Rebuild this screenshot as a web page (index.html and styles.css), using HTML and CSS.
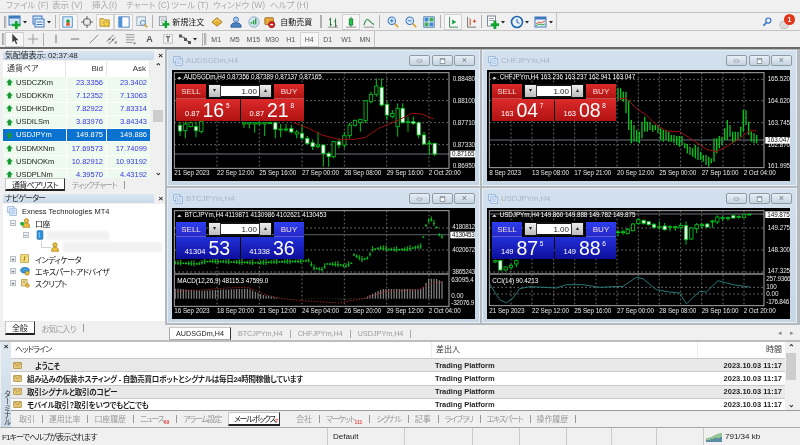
FILE: index.html
```html
<!DOCTYPE html>
<html lang="ja">
<head>
<meta charset="utf-8">
<title>MetaTrader 4</title>
<link rel="stylesheet" href="styles.css">
</head>
<body>
<svg class="defs" aria-hidden="true">
  <symbol id="i-up" viewBox="0 0 10 10"><path d="M5 0l5 5H7.4v4.4H2.6V5H0z" fill="#179a35"/></symbol>
  <symbol id="i-mail" viewBox="0 0 12 9"><rect x=".5" y=".5" width="11" height="8" rx="1" fill="#e2c676" stroke="#a88b3e"/><path d="M1 1l5 4 5-4" fill="none" stroke="#a88b3e"/></symbol>
  <symbol id="i-win" viewBox="0 0 14 14"><rect x="1" y="1" width="9" height="8" fill="#e8f0fa" stroke="#7aa3d6"/><rect x="4" y="4" width="9" height="9" fill="#e8f0fa" stroke="#7aa3d6"/><path d="M5.5 7h6M5.5 10h6" stroke="#7aa3d6"/></symbol>
  <symbol id="i-min" viewBox="0 0 9 9"><rect x="1" y="3" width="7" height="3" rx="1" fill="#fff" stroke="#6b7783"/></symbol>
  <symbol id="i-max" viewBox="0 0 9 9"><rect x="1" y="1" width="7" height="7" fill="#fff" stroke="#6b7783"/><path d="M1 2.500h7" stroke="#6b7783"/></symbol>
</svg>

<div class="app">
  <div class="menu">
    <span class="m1">ファイル (F)</span><span class="m2">表示 (V)</span><span class="m3">挿入(I)</span><span class="m4">チャート (C)</span><span class="m5">ツール (T)</span><span class="m6">ウィンドウ (W)</span><span class="m7">ヘルプ (H)</span>
  </div>

  <div class="tb tb1">
    <i class="grip"></i>
    <b class="ti wide"><svg viewBox="0 0 18 14" class="ic-w"><rect x="1" y="1" width="11" height="9" fill="#cfe3f7" stroke="#3f79bd"/><rect x="1" y="1" width="11" height="2.5" fill="#3f79bd"/><rect x="7" y="6" width="2.6" height="8" fill="#12a52d"/><rect x="4.3" y="8.7" width="8" height="2.6" fill="#12a52d"/><path d="M15 6h4l-2 2.4z" fill="#222"/></svg></b>
    <b class="ti wide"><svg viewBox="0 0 18 14" class="ic-w"><rect x="1" y="1" width="9" height="8" fill="#cfe3f7" stroke="#3f79bd"/><rect x="3" y="4" width="9" height="8" fill="#e8f1fb" stroke="#3f79bd"/><path d="M4.5 7h6M4.5 9.5h6" stroke="#3f79bd"/><path d="M15 6h4l-2 2.4z" fill="#222"/></svg></b>
    <i class="sep"></i>
    <b class="ti on"><svg viewBox="0 0 14 14"><rect x="1" y="1" width="11" height="12" fill="#e3f0fb" stroke="#3f88c5"/><circle cx="7" cy="6" r="2.2" fill="#2ea346"/><circle cx="7" cy="9.5" r="2.2" fill="#df5b33"/></svg></b>
    <b class="ti"><svg viewBox="0 0 14 14"><circle cx="7" cy="7" r="4.2" fill="#e9e9e9" stroke="#777" stroke-width="1.2"/><path d="M7 0v4M7 10v4M0 7h4M10 7h4" stroke="#666" stroke-width="1.2"/></svg></b>
    <b class="ti on"><svg viewBox="0 0 14 14"><path d="M1 3h4l1 1.5h6V12H1z" fill="#f1cf63" stroke="#ba9330"/><path d="M8.5 5l1.3 2.6 2.9.3-2.1 2 .6 2.9-2.7-1.4-2.6 1.4.6-2.9-2.1-2 2.9-.3z" fill="#f5d34c" stroke="#b38a23" stroke-width=".6"/></svg></b>
    <b class="ti on"><svg viewBox="0 0 14 14"><rect x="1" y="1" width="12" height="12" fill="#fff" stroke="#3f79bd"/><rect x="1" y="1" width="4" height="12" fill="#4d93d8"/></svg></b>
    <b class="ti"><svg viewBox="0 0 14 14"><rect x="1" y="1" width="10" height="10" fill="#e8eef5" stroke="#8fa1b5"/><circle cx="8" cy="8" r="3" fill="#d4e6f7" stroke="#5e84ad"/><path d="M10 10l3 3" stroke="#d6a034" stroke-width="2"/></svg></b>
    <i class="sep"></i>
    <b class="ti txt t1"><svg viewBox="0 0 14 14"><rect x="1.5" y="1" width="8" height="10" fill="#fff" stroke="#7d8a97"/><path d="M3 3.5h5M3 5.5h5M3 7.5h3" stroke="#9aa5b0"/><rect x="7.7" y="5.5" width="2.8" height="8.500" fill="#0fa52d"/><rect x="5" y="8.3" width="8.4" height="2.8" fill="#0fa52d"/></svg><span>新規注文</span></b>
    <b class="ti"><svg viewBox="0 0 14 14"><path d="M1 7l6-5 6 5-6 5z" fill="#e6b12e" stroke="#9b7415"/><path d="M3 7l4-3 4 3" fill="none" stroke="#f8e4a0"/></svg></b>
    <b class="ti"><svg viewBox="0 0 14 14"><circle cx="7" cy="4.2" r="3" fill="#a5c9ee" stroke="#3d6eab"/><path d="M1 13c0-4 2-5 6-5s6 1 6 5z" fill="#4b82c4" stroke="#2c5a95"/></svg></b>
    <b class="ti"><svg viewBox="0 0 14 14"><circle cx="7" cy="7" r="6" fill="#d8e8f4" stroke="#7fa3bf"/><path d="M4 9V7M6.5 10V5M9 10V3" stroke="#249a3e" stroke-width="1.6"/></svg></b>
    <b class="ti txt t2"><svg viewBox="0 0 14 14"><rect x="1" y="2" width="10" height="8" rx="1" fill="#e9a83a" stroke="#94681a"/><circle cx="9" cy="10" r="3.6" fill="#d92b2b" stroke="#8d1010"/><rect x="7.3" y="9.3" width="3.4" height="1.4" fill="#fff"/></svg><span>自動売買</span></b>
    <i class="sep s2"></i>
    <b class="ti"><svg viewBox="0 0 14 14"><path d="M4 2v10M2.5 4H4M4 10h1.5M10 3v10M8.5 6H10M10 11h1.5" stroke="#28763f" stroke-width="1.2" fill="none"/><path d="M1 13h12" stroke="#888"/></svg></b>
    <b class="ti on"><svg viewBox="0 0 14 14"><path d="M7 1v12" stroke="#187a30"/><rect x="5" y="3.5" width="4" height="7" fill="#22c848" stroke="#187a30"/><path d="M1 13h12" stroke="#888"/></svg></b>
    <b class="ti"><svg viewBox="0 0 14 14"><path d="M1 11c2-7 4-8 6-6s4 4 6 5" fill="none" stroke="#2f8a45" stroke-width="1.2"/><path d="M1 13h12" stroke="#888"/></svg></b>
    <i class="sep"></i>
    <b class="ti"><svg viewBox="0 0 14 14"><circle cx="5.6" cy="5.6" r="4.4" fill="#d5e8f8" stroke="#3f79bd" stroke-width="1.2"/><path d="M3.5 5.6h4.2M5.6 3.5v4.2" stroke="#1d6fbd"/><path d="M9 9l4 4" stroke="#d9a436" stroke-width="2"/></svg></b>
    <b class="ti"><svg viewBox="0 0 14 14"><circle cx="5.6" cy="5.6" r="4.4" fill="#d5e8f8" stroke="#3f79bd" stroke-width="1.2"/><path d="M3.5 5.6h4.2" stroke="#1d6fbd"/><path d="M9 9l4 4" stroke="#d9a436" stroke-width="2"/></svg></b>
    <b class="ti"><svg viewBox="0 0 14 14"><rect x="1" y="1" width="12" height="12" fill="#fff" stroke="#2d68a8"/><rect x="2" y="2" width="4.5" height="4.5" fill="#3f89d4"/><rect x="7.5" y="2" width="4.5" height="4.5" fill="#3fae58"/><rect x="2" y="7.5" width="4.5" height="4.5" fill="#3fae58"/><rect x="7.5" y="7.5" width="4.5" height="4.5" fill="#3f89d4"/></svg></b>
    <i class="sep"></i>
    <b class="ti on"><svg viewBox="0 0 14 14"><path d="M3 1v12h10" fill="none" stroke="#1f7f3a"/><path d="M6 4l5 3-5 3z" fill="#1fa648"/></svg></b>
    <b class="ti"><svg viewBox="0 0 14 14"><path d="M3 1v12h10" fill="none" stroke="#666"/><path d="M6 3v8M9 6h4M11 4v4" stroke="#d04a2a" stroke-width="1.2"/></svg></b>
    <i class="sep"></i>
    <b class="ti wide"><svg viewBox="0 0 18 14" class="ic-w"><rect x="1.5" y="1" width="8" height="10" fill="#fff" stroke="#7d8a97"/><path d="M3 3.5h5M3 5.5h5" stroke="#9aa5b0"/><rect x="7.5" y="5.5" width="2.8" height="8.500" fill="#0fa52d"/><rect x="4.8" y="8.3" width="8.2" height="2.8" fill="#0fa52d"/><path d="M15 6h4l-2 2.4z" fill="#222"/></svg></b>
    <b class="ti wide"><svg viewBox="0 0 18 14" class="ic-w"><circle cx="7" cy="7" r="5.5" fill="#e8f2fb" stroke="#1f66ad" stroke-width="1.6"/><path d="M7 4v3.3l2.4 1" stroke="#1f66ad" fill="none"/><path d="M15 6h4l-2 2.4z" fill="#222"/></svg></b>
    <b class="ti wide"><svg viewBox="0 0 18 14" class="ic-w"><rect x="1" y="2" width="11" height="10" fill="#eaf3fb" stroke="#3f79bd"/><rect x="1" y="2" width="11" height="2.5" fill="#3f79bd"/><path d="M2 9l3-2 2 1 4-2" fill="none" stroke="#e0552e"/><path d="M2 11l3-2 3 1 3-1" fill="none" stroke="#2ea346"/><path d="M15 6h4l-2 2.4z" fill="#222"/></svg></b>
    <span class="tb-end"></span>
    <span class="tb-right">
      <svg viewBox="0 0 14 14" class="search"><circle cx="8.8" cy="5" r="3.6" fill="none" stroke="#2b6fc9" stroke-width="1.6"/><path d="M6 8l-4 4" stroke="#2b6fc9" stroke-width="2.2"/></svg>
      <span class="bell"><svg viewBox="0 0 14 14"><ellipse cx="6" cy="8" rx="5" ry="4.4" fill="#dcdcdc" stroke="#bdbdbd"/><path d="M3 11l-1 3 3-2z" fill="#cfcfcf"/></svg><em>1</em></span>
    </span>
  </div>

  <div class="tb tb2">
    <i class="grip"></i>
    <b class="ti on sm"><svg viewBox="0 0 14 14"><path d="M5 1v10l2.4-2.2L9.4 13l1.4-.7L9 8.400h3.200z" fill="#3b3f44"/></svg></b>
    <b class="ti sm"><svg viewBox="0 0 14 14"><path d="M7 1v12M1 7h12" stroke="#8a9096"/></svg></b>
    <i class="sep"></i>
    <b class="ti sm"><svg viewBox="0 0 14 14"><path d="M7 2v10" stroke="#666"/></svg></b>
    <b class="ti sm"><svg viewBox="0 0 14 14"><path d="M2 7h10" stroke="#666"/></svg></b>
    <b class="ti sm"><svg viewBox="0 0 14 14"><path d="M2 12L12 2" stroke="#777"/></svg></b>
    <b class="ti sm"><svg viewBox="0 0 14 14"><path d="M1 10l8-8M3 13l8-8" stroke="#666"/><circle cx="4" cy="7" r="1" fill="#555"/><circle cx="8" cy="8" r="1" fill="#555"/><text x="10" y="13" class="mini">E</text></svg></b>
    <b class="ti sm"><svg viewBox="0 0 14 14"><path d="M1 2h10M1 5h10M1 8h10M1 11h8" stroke="#888"/><text x="10" y="13.500" class="mini">F</text></svg></b>
    <b class="ti sm lett">A</b>
    <b class="ti sm"><svg viewBox="0 0 14 14"><rect x="2" y="2" width="10" height="10" fill="#f6f6f6" stroke="#999" stroke-dasharray="2 1"/><path d="M4.500 4.500h5M7 4.500v6" stroke="#444" stroke-width="1.200"/></svg></b>
    <b class="ti sm wide"><svg viewBox="0 0 18 14" class="ic-w"><path d="M2 4l5 2M7 8l5 2" stroke="#555"/><rect x="1" y="2.500" width="3" height="3" fill="#555"/><rect x="6" y="6" width="3" height="3" fill="#555"/><rect x="10" y="9" width="3" height="3" fill="#555"/><path d="M15 6h4l-2 2.400z" fill="#222"/></svg></b>
    <i class="sep s3"></i>
    <i class="grip"></i>
    <b class="per">M1</b><b class="per">M5</b><b class="per">M15</b><b class="per">M30</b><b class="per">H1</b><b class="per on">H4</b><b class="per">D1</b><b class="per">W1</b><b class="per">MN</b>
    <span class="tb-end"></span>
  </div>
  <div class="darkline"></div>

  <div class="work">
    <aside class="side">
      <section class="mw">
        <div class="phead"><span>気配値表示: 02:37:48</span><em>×</em></div>
        <div class="mw-body">
          <div class="mw-table">
            <div class="mw-h"><span>通貨ペア</span><span>Bid</span><span>Ask</span></div>
            <div class="mw-r"><span><svg><use href="#i-up"/></svg>USDCZKm</span><span>23.3356</span><span>23.3402</span></div>
            <div class="mw-r"><span><svg><use href="#i-up"/></svg>USDDKKm</span><span>7.12352</span><span>7.13063</span></div>
            <div class="mw-r"><span><svg><use href="#i-up"/></svg>USDHKDm</span><span>7.82922</span><span>7.83314</span></div>
            <div class="mw-r"><span><svg><use href="#i-up"/></svg>USDILSm</span><span>3.83976</span><span>3.84343</span></div>
            <div class="mw-r sel"><span><svg><use href="#i-up"/></svg>USDJPYm</span><span>149.875</span><span>149.886</span></div>
            <div class="mw-r"><span><svg><use href="#i-up"/></svg>USDMXNm</span><span>17.69573</span><span>17.74099</span></div>
            <div class="mw-r"><span><svg><use href="#i-up"/></svg>USDNOKm</span><span>10.82912</span><span>10.93192</span></div>
            <div class="mw-r"><span><svg><use href="#i-up"/></svg>USDPLNm</span><span>4.39570</span><span>4.43192</span></div>
          </div>
          <div class="vscroll mwscroll"><b>⌃</b><i></i><b>⌄</b></div>
        </div>
        <div class="tabs stabs"><span class="tab on">通貨ペアリスト</span><span class="tab">ティックチャート</span><i></i></div>
      </section>

      <section class="nav">
        <div class="phead kana"><span>ナビゲーター</span><em>×</em></div>
        <div class="tree">
          <div class="tr l0"><svg class="ti-ic"><use href="#i-win"/></svg><span class="lat">Exness Technologies MT4</span></div>
          <div class="tr l1"><i class="exp">−</i><svg class="ti-ic" viewBox="0 0 14 14"><circle cx="9" cy="4" r="3" fill="#eebd3a" stroke="#a17c17"/><path d="M4 13c0-4 2-6 5-6s5 2 5 6z" fill="#eebd3a" stroke="#a17c17"/><circle cx="3" cy="8" r="2.800" fill="#1fae3c"/></svg><span>口座</span></div>
          <div class="tr l2"><i class="exp">−</i><svg class="ti-ic" viewBox="0 0 14 14"><rect x="3" y="1" width="8" height="12" rx="1" fill="#2b93dd" stroke="#17649d"/><path d="M6 3v8" stroke="#b7def8"/></svg><span class="blur b1"></span></div>
          <div class="tr l3"><svg class="ti-ic" viewBox="0 0 14 14"><circle cx="7" cy="4" r="3" fill="#eebd3a" stroke="#a17c17"/><path d="M2 13c0-4 2-6 5-6s5 2 5 6z" fill="#eebd3a" stroke="#a17c17"/></svg><span class="blur b2"></span></div>
          <div class="tr l1"><i class="exp">+</i><svg class="ti-ic" viewBox="0 0 14 14"><rect x="1" y="1" width="11" height="11" fill="#f5df7c" stroke="#b6963a"/><path d="M7 3L5.500 10" stroke="#8a6d1c" stroke-width="1.200"/></svg><span>インディケータ</span></div>
          <div class="tr l1"><i class="exp">+</i><svg class="ti-ic" viewBox="0 0 14 14"><ellipse cx="7" cy="6" rx="6" ry="4" fill="#3e9ad9" stroke="#1f6da4"/><circle cx="10" cy="10" r="2.800" fill="#eebd3a" stroke="#a17c17"/></svg><span>エキスパートアドバイザ</span></div>
          <div class="tr l1 end"><i class="exp">+</i><svg class="ti-ic" viewBox="0 0 14 14"><path d="M2 2h8v9H2z" fill="#f3e19a" stroke="#a98e35"/><path d="M4 4.500h4M4 7h4" stroke="#a98e35"/><circle cx="10.500" cy="10.500" r="2.500" fill="#eebd3a" stroke="#a17c17"/></svg><span>スクリプト</span></div>
        </div>
        <div class="tabs ntabs"><span class="tab on">全般</span><span class="tab">お気に入り</span><i></i></div>
      </section>
    </aside>

    <main class="mdi">
      <div class="desk">
        <article class="win w1">
          <header class="wt"><svg><use href="#i-win"/></svg><span>AUDSGDm,H4</span><nav><b><svg><use href="#i-min"/></svg></b><b><svg><use href="#i-max"/></svg></b><b class="x">×</b></nav></header>
          <div class="chart">
            <svg class="plot" viewBox="20 60 909 333" data-chart="aud">
              <g class="lay"></g>
              <text class="info" x="55" y="88">AUDSGDm,H4  0.87356 0.87389 0.87137 0.87165</text>
              <path d="M35 86h14l-7-6z" fill="#fff"/>
              <text class="ax" x="862" y="94">0.88480</text><text class="ax" x="862" y="158">0.88100</text><text class="ax" x="862" y="224">0.87710</text><text class="ax" x="862" y="290">0.87330</text><text class="ax" x="862" y="355">0.86950</text>
              <rect x="855" y="302" width="75" height="20" fill="#fff"/><text class="ax k" x="860" y="318">0.87165</text>
              <text class="ax" x="27" y="374">21 Sep 2023</text><text class="ax" x="155" y="374">22 Sep 12:00</text><text class="ax" x="282" y="374">25 Sep 16:00</text><text class="ax" x="410" y="374">27 Sep 00:00</text><text class="ax" x="537" y="374">28 Sep 08:00</text><text class="ax" x="664" y="374">29 Sep 16:00</text><text class="ax" x="790" y="374">2 Oct 20:00</text>
            </svg>
            <div class="trade red">
              <div class="tr-top"><b class="tbtn">SELL</b><div class="spin"><i>▾</i><span>1.00</span><i>▴</i></div><b class="tbtn">BUY</b></div>
              <div class="tr-bot"><div class="px"><small>0.87</small><strong>16</strong><sup>5</sup></div><div class="px"><small>0.87</small><strong>21</strong><sup>8</sup></div></div>
            </div>
          </div>
        </article>

        <article class="win w2">
          <header class="wt"><svg><use href="#i-win"/></svg><span>CHFJPYm,H4</span><nav><b><svg><use href="#i-min"/></svg></b><b><svg><use href="#i-max"/></svg></b><b class="x">×</b></nav></header>
          <div class="chart">
            <svg class="plot" viewBox="22 60 909 333" data-chart="chf">
              <g class="lay"></g>
              <text class="info" x="60" y="88">CHFJPYm,H4  163.236 163.237 162.941 163.047</text>
              <path d="M37 86h14l-7-6z" fill="#fff"/>
              <text class="ax" x="864" y="94">165.520</text><text class="ax" x="864" y="158">164.620</text><text class="ax" x="864" y="224">163.745</text><text class="ax" x="864" y="290">162.870</text><text class="ax" x="864" y="355">161.995</text>
              <rect x="857" y="261" width="76" height="20" fill="#fff"/><text class="ax k" x="863" y="277">163.047</text>
              <text class="ax" x="29" y="374">8 Sep 2023</text><text class="ax" x="157" y="374">13 Sep 08:00</text><text class="ax" x="284" y="374">17 Sep 21:00</text><text class="ax" x="412" y="374">20 Sep 12:00</text><text class="ax" x="539" y="374">25 Sep 00:00</text><text class="ax" x="666" y="374">27 Sep 16:00</text><text class="ax" x="792" y="374">2 Oct 04:00</text>
            </svg>
            <div class="trade red alt">
              <div class="tr-top"><b class="tbtn">SELL</b><div class="spin"><i>▾</i><span>1.00</span><i>▴</i></div><b class="tbtn">BUY</b></div>
              <div class="tr-bot"><div class="px"><small>163</small><strong>04</strong><sup>7</sup></div><div class="px"><small>163</small><strong>08</strong><sup>8</sup></div></div>
            </div>
          </div>
        </article>

        <article class="win w3">
          <header class="wt"><svg><use href="#i-win"/></svg><span>BTCJPYm,H4</span><nav><b><svg><use href="#i-min"/></svg></b><b><svg><use href="#i-max"/></svg></b><b class="x">×</b></nav></header>
          <div class="chart">
            <svg class="plot" viewBox="20 60 909 333" data-chart="btc">
              <g class="lay"></g>
              <text class="info" x="58" y="88">BTCJPYm,H4  4119871 4130986 4102621 4130453</text>
              <path d="M35 86h14l-7-6z" fill="#fff"/>
              <text class="ax fit" x="861" y="123">4180812</text><text class="ax fit" x="861" y="191">4020672</text><text class="ax fit" x="861" y="257">3865243</text>
              <rect x="855" y="131" width="75" height="20" fill="#fff"/><text class="ax k fit" x="860" y="147">4130453</text>
              <text class="info" x="36" y="286">MACD(12,26,9) 48115.3 47599.0</text>
              <text class="ax" x="858" y="282">63095.4</text><text class="ax" x="858" y="331">0.00</text><text class="ax fit" x="858" y="350">-32076.9</text>
              <text class="ax" x="27" y="374">16 Sep 2023</text><text class="ax" x="155" y="374">18 Sep 20:00</text><text class="ax" x="282" y="374">21 Sep 12:00</text><text class="ax" x="410" y="374">24 Sep 04:00</text><text class="ax" x="537" y="374">26 Sep 20:00</text><text class="ax" x="664" y="374">29 Sep 12:00</text><text class="ax" x="790" y="374">2 Oct 04:00</text>
            </svg>
            <div class="trade blue">
              <div class="tr-top"><b class="tbtn">SELL</b><div class="spin"><i>▾</i><span>1.00</span><i>▴</i></div><b class="tbtn">BUY</b></div>
              <div class="tr-bot"><div class="px"><small>41304</small><strong>53</strong></div><div class="px"><small>41338</small><strong>36</strong></div></div>
            </div>
          </div>
        </article>

        <article class="win w4">
          <header class="wt"><svg><use href="#i-win"/></svg><span>USDJPYm,H4</span><nav><b><svg><use href="#i-min"/></svg></b><b><svg><use href="#i-max"/></svg></b><b class="x">×</b></nav></header>
          <div class="chart">
            <svg class="plot" viewBox="22 60 909 333" data-chart="usd">
              <g class="lay"></g>
              <text class="info" x="60" y="88">USDJPYm,H4  149.860 149.888 149.782 149.875</text>
              <path d="M37 86h14l-7-6z" fill="#fff"/>
              <text class="ax" x="864" y="126">149.275</text><text class="ax" x="864" y="191">148.300</text><text class="ax" x="864" y="256">147.325</text>
              <rect x="857" y="70" width="76" height="20" fill="#fff"/><text class="ax k" x="863" y="86">149.875</text>
              <text class="info" x="38" y="286">CCI(14) 90.4213</text>
              <text class="ax fit" x="860" y="280">257.9366</text><text class="ax" x="860" y="303">100</text><text class="ax" x="860" y="323">0.00</text><text class="ax fit" x="860" y="347">-176.846</text>
              <text class="ax" x="29" y="374">21 Sep 2023</text><text class="ax" x="157" y="374">22 Sep 12:00</text><text class="ax" x="284" y="374">25 Sep 16:00</text><text class="ax" x="412" y="374">27 Sep 00:00</text><text class="ax" x="539" y="374">28 Sep 08:00</text><text class="ax" x="666" y="374">29 Sep 16:00</text><text class="ax" x="792" y="374">2 Oct 20:00</text>
            </svg>
            <div class="trade blue alt">
              <div class="tr-top"><b class="tbtn">SELL</b><div class="spin"><i>▾</i><span>1.00</span><i>▴</i></div><b class="tbtn">BUY</b></div>
              <div class="tr-bot"><div class="px"><small>149</small><strong>87</strong><sup>5</sup></div><div class="px"><small>149</small><strong>88</strong><sup>6</sup></div></div>
            </div>
          </div>
        </article>
      </div>
      <div class="tabs ctabs"><span class="tab on">AUDSGDm,H4</span><span class="tab">BTCJPYm,H4</span><span class="tab">CHFJPYm,H4</span><span class="tab">USDJPYm,H4</span><em class="arrows">◂</em><em class="arrows">▸</em></div>
    </main>
  </div>

  <div class="term">
    <div class="tstrip"><em>×</em><span>ターミナル</span></div>
    <div class="tmain">
      <div class="tgrid">
        <div class="mail">
          <div class="mh"><span>ヘッドライン</span><span>差出人</span><span>時間</span></div>
          <div class="mr g"><span class="first"><svg><use href="#i-mail"/></svg><u>ようこそ</u></span><span>Trading Platform</span><span>2023.10.03 11:17</span></div>
          <div class="mr"><span><svg><use href="#i-mail"/></svg><u>組み込みの仮装ホスティング - 自動売買ロボットとシグナルは毎日24時間稼働しています</u></span><span>Trading Platform</span><span>2023.10.03 11:17</span></div>
          <div class="mr g"><span><svg><use href="#i-mail"/></svg><u>取引シグナルと取引のコピー</u></span><span>Trading Platform</span><span>2023.10.03 11:17</span></div>
          <div class="mr"><span><svg><use href="#i-mail"/></svg><u>モバイル取引？取引をいつでもどこでも</u></span><span>Trading Platform</span><span>2023.10.03 11:17</span></div>
        </div>
        <div class="vscroll tscroll"><b>⌃</b><i></i><b>⌄</b></div>
      </div>
      <div class="tabs ttabs"><span class="tab">取引</span><span class="tab">運用比率</span><span class="tab">口座履歴</span><span class="tab kn">ニュース<sub>69</sub></span><span class="tab kn">アラーム設定</span><span class="tab on kn">メールボックス<sub>7</sub></span><span class="tab aft">会社</span><span class="tab kn">マーケット<sub>111</sub></span><span class="tab kn">シグナル</span><span class="tab">記事</span><span class="tab kn">ライブラリ</span><span class="tab kn">エキスパート</span><span class="tab">操作履歴</span><i></i></div>
    </div>
  </div>

  <footer class="status">
    <span class="c1">F1キーでヘルプが表示されます</span><span class="c2">Default</span><span class="c3"></span><span class="c4"></span><span class="c4"></span><span class="c5"></span><span class="c5"></span><span class="c4"></span>
    <span class="c9"><svg viewBox="0 0 16 10" class="kb"><path d="M1 10V6M3 10V5.500M5 10V5M7 10V4M9 10V3M11 10V2M13 10V1.500M15 10V1" stroke="#3a9a3a" stroke-width="1"/><path d="M1 10V8M3 10V8M5 10V7M7 10V7M9 10V6M11 10V6M13 10V6M15 10V5" stroke="#2456b0" stroke-width="1"/></svg>791/34 kb</span>
  </footer>
</div>
<script src="script.js"></script>
</body>
</html>
```

FILE: styles.css
```css
* { box-sizing: border-box; }
html, body { margin: 0; padding: 0; background: #f0f0f0; }
body { font: 7.5px "Liberation Sans", "Noto Sans CJK JP", sans-serif; color: #222; font-feature-settings: "palt"; }
.defs { width: 0; height: 0; position: absolute; }
.app { width: 800px; height: 445px; display: flex; flex-direction: column; overflow: hidden; background: #f0f0f0; filter: blur(.3px); }
b, em, i { font-style: normal; font-weight: normal; }
u { text-decoration: none; }

/* menu */
.menu { height: 13px; display: flex; align-items: flex-start; color: #ababab; font-size: 8.500px; line-height: 11px; white-space: nowrap; border-bottom: 1px solid #c0c0c0; }
.menu span { flex: none; }
.m1 { margin-left: 6px; width: 46px; } .m2 { width: 40px; } .m3 { width: 34px; } .m4 { width: 45px; } .m5 { width: 42px; } .m6 { width: 57px; }

/* toolbars */
.tb { display: flex; align-items: center; flex: none; }
.tb1 { height: 18px; padding-left: 4px; border-bottom: 1px solid #c4c4c4; }
.tb2 { height: 16px; padding-left: 2px; }
.darkline { height: 2px; background: #6a6a6a; flex: none; }
.grip { width: 3px; height: 12px; background: #bdbdbd; border-left: 1px solid #aaa; border-right: 1px solid #ddd; flex: none; }
.sep { width: 1px; height: 13px; background: #b0b0b0; margin: 0 3px 0 1px; flex: none; }
.s2 { width: 2px; margin: 0 1px 0 0; }
.s3 { margin: 0 1px; }
.ti { width: 18.400px; height: 16px; display: flex; align-items: center; justify-content: center; flex: none; color: #111; font-size: 8px; }
.ti svg { width: 12px; height: 12px; overflow: visible; flex: none; }
.ti .ic-w { width: 18px; height: 14px; }
.ti.wide { width: 23.600px; justify-content: flex-start; padding-left: 1px; }
.ti.sm { height: 15px; width: 18.600px; }
.ti.sm.wide { width: 23.600px; }
.ti.on { background: #f7f7f7; box-shadow: inset 0 0 0 1px #d2d2d2; }
.ti.txt { width: auto; }
.t1 { gap: 2px; padding: 0 4px 0 2px; }
.t2 { gap: 4px; padding: 0 8px 0 1px; }
.lett { font-weight: bold; color: #555; font-size: 9px; }
.mini { font: 5px "Liberation Sans", sans-serif; fill: #555; }
.per { width: 18.600px; height: 15px; display: flex; align-items: center; justify-content: center; color: #555; font-size: 7px; flex: none; }
.per.on { background: #f7f7f7; box-shadow: inset 0 0 0 1px #d2d2d2; }
.tb-end { width: 1px; height: 100%; background: #c4c4c4; flex: none; }
.tb-right { margin-left: auto; display: flex; align-items: center; gap: 7px; padding-right: 5px; }
.search { width: 10px; height: 10px; }
.bell { position: relative; width: 16px; height: 14px; display: block; }
.bell svg { width: 12px; height: 12px; position: absolute; left: 0; top: 3px; }
.bell em { position: absolute; right: 0; top: -1px; width: 11px; height: 11px; background: #e2351b; color: #fff; border-radius: 50%; font-size: 7px; font-weight: bold; text-align: center; line-height: 11px; }

/* workspace */
.work { flex: 1; min-height: 0; display: flex; }
.side { width: 165px; flex: none; padding: 0 0 5px 3px; display: flex; flex-direction: column; }
.phead { height: 11px; display: flex; align-items: center; justify-content: space-between; flex: none; font-size: 8px; color: #222; padding-right: 1px; letter-spacing: -.2px; }
.phead.kana { letter-spacing: -.9px; }
.phead span { flex: 1; height: 9px; background: linear-gradient(#dbe7f2, #c9d9e9); line-height: 9px; padding-left: 2px; margin-right: 3px; }
.phead em { font-weight: bold; font-size: 8px; width: 7px; text-align: center; }

.mw { height: 142px; flex: none; display: flex; flex-direction: column; padding-top: 1px; }
.mw-body { height: 117px; display: flex; flex: none; overflow: hidden; }
.mw-table { width: 147px; flex: none; background: #fff; overflow: hidden; }
.mw-h { height: 15.500px; display: grid; grid-template-columns: 63px 41px 43px; align-items: center; color: #333; }
.mw-h span { padding: 0 3px; height: 100%; line-height: 15px; border-right: 1px solid #e6e6e6; text-align: right; font-size: 8px; }
.mw-h span:first-child { text-align: left; padding-left: 4px; }
.mw-r { height: 13.200px; display: grid; grid-template-columns: 63px 41px 43px; align-items: center; background: #eefaee; border-bottom: 1px solid #fff; white-space: nowrap; overflow: hidden; }
.mw-r span { color: #3535e6; text-align: right; padding-right: 3px; line-height: 12px; font-size: 7.500px; }
.mw-r span:nth-child(2) { border-left: 1px solid #fff; border-right: 1px solid #fff; }
.mw-r span:first-child { color: #222; display: flex; align-items: center; text-align: left; padding-left: 3px; }
.mw-r svg { width: 7px; height: 7px; margin-right: 3px; flex: none; }
.mw-r.sel { background: #0a72cf; }
.mw-r.sel span { color: #fff; }
.mw-r.sel span:first-child { color: #fff; }
.vscroll { display: flex; flex-direction: column; justify-content: space-between; align-items: center; background: #f0f0f0; position: relative; color: #333; }
.vscroll b { height: 11px; line-height: 11px; font-size: 8px; font-weight: bold; }
.vscroll i { position: absolute; left: 1px; right: 1px; background: #cdcdcd; }
.mwscroll { width: 12px; margin-left: 2px; }
.mwscroll i { top: 49px; height: 12px; }
.tabs { display: flex; align-items: center; flex: none; color: #9a9a9a; white-space: nowrap; }
.tabs > i { width: 1px; height: 8px; background: #999; }
.tab { position: relative; height: 100%; display: flex; align-items: center; }
.tab.on { background: #fff; color: #222; border: 1px solid #c8c8c8; border-bottom: 2px solid #222; border-right: 1px solid #333; }
.stabs { height: 13px; padding-left: 2px; font-size: 8px; }
.stabs .tab { padding: 0 6px; letter-spacing: -.8px; }
.stabs .tab + .tab { padding: 0 7px; letter-spacing: -1.200px; }

.nav { flex: 1; display: flex; flex-direction: column; padding-top: 2px; min-height: 0; }
.tree { flex: 1; background: #fff; padding-top: 1px; overflow: hidden; }
.tr { height: 12px; display: flex; align-items: center; white-space: nowrap; position: relative; font-size: 8px; color: #222; letter-spacing: -.5px; }
.ti-ic { width: 10px; height: 10px; flex: none; }
.lat { font-size: 7.500px; letter-spacing: 0; }
.l0 { padding-left: 4px; } .l0 .ti-ic { margin-right: 5px; }
.l1 { padding-left: 7px; } .l1 .ti-ic { margin: 0 5px 0 4px; }
.l2 { padding-left: 20px; } .l2 .ti-ic { margin-left: 6px; }
.l3 { padding-left: 47px; }
.exp { width: 6px; height: 6px; border: 1px solid #b9c1c9; background: #eef1f4; font-size: 6px; line-height: 4px; text-align: center; color: #445; flex: none; letter-spacing: 0; }
.l1::before, .l2::before { content: ""; position: absolute; width: 1px; background: #cfd3d8; left: 9px; top: 0; bottom: 0; z-index: -1; }
.l1.end::before { bottom: 6px; }
.l3::before { content: ""; position: absolute; left: 38px; top: 0; width: 9px; height: 6px; border-left: 1px solid #cfd3d8; border-bottom: 1px solid #cfd3d8; }
.blur { display: block; height: 9px; background: #f1f1f1; filter: blur(1px); }
.b1 { width: 63px; margin-left: 1px; } .b2 { width: 99px; margin-left: 3px; height: 10px; }
.ntabs { height: 14px; padding-left: 2px; font-size: 8px; }
.ntabs .tab { padding: 0 6px; letter-spacing: -.2px; }
.ntabs .tab + .tab { padding: 0 7px; letter-spacing: -.8px; }

/* MDI */
.mdi { flex: 1; min-width: 0; display: flex; flex-direction: column; }
.desk { position: relative; height: 276px; flex: none; background: #b4b9be; }
.win { position: absolute; background: linear-gradient(#d3e0ed, #c7d6e5); border: 1px solid #e8eef4; display: flex; flex-direction: column; }
.w1 { left: 2px; top: 1px; width: 313px; height: 136px; }
.w2 { left: 317px; top: 1px; width: 315px; height: 136px; }
.w3 { left: 2px; top: 139px; width: 313px; height: 135px; }
.w4 { left: 317px; top: 139px; width: 315px; height: 135px; }
.wt { height: 19px; flex: none; display: flex; align-items: center; padding: 0 4px 0 5px; color: #a9b6c3; font-size: 7.800px; }
.wt > svg { width: 10px; height: 10px; margin-right: 3px; flex: none; }
.wt nav { margin-left: auto; display: flex; gap: 1.500px; }
.wt nav b { width: 21px; height: 11px; border: 1px solid #8f9ba7; border-radius: 2px; background: linear-gradient(#e8eff6, #c5d3e0); display: flex; align-items: center; justify-content: center; color: #6b7783; font-size: 9px; line-height: 9px; }
.wt nav svg { width: 7px; height: 6px; }
.chart { position: relative; margin-left: 4px; width: 303px; height: 111px; background: #000; overflow: hidden; flex: none; }
.plot { display: block; width: 303px; height: 111px; }
.info { font: 19px "Liberation Sans", sans-serif; fill: #fff; letter-spacing: -.2px; }
.ax { font: 19px "Liberation Sans", sans-serif; fill: #e8e8e8; letter-spacing: -.2px; }
.ax.k { fill: #111; }
.ax.fit { letter-spacing: -.9px; }

.trade { position: absolute; left: 4px; top: 14px; width: 128px; display: flex; flex-direction: column; color: #fff; }
.trade.alt { left: 5px; width: 124px; }
.tr-top { height: 15px; display: flex; justify-content: space-between; align-items: flex-start; }
.tbtn { width: 30px; height: 15px; display: flex; align-items: center; justify-content: center; font-size: 8px; color: #f4dede; box-shadow: inset 0 -1px 0 rgba(255,255,255,.25); flex: none; }
.spin { flex: 1; height: 14px; margin: 0 2px; background: #fff; border: 1px solid #111; box-shadow: 0 0 0 1px #111 inset; display: flex; align-items: center; color: #222; }
.spin i { width: 12px; height: 100%; background: linear-gradient(#eee, #bbb); border-right: 1px solid #333; text-align: center; font-size: 6px; line-height: 11px; flex: none; }
.spin i:last-child { border-right: 0; border-left: 1px solid #333; }
.spin span { flex: 1; text-align: right; padding-right: 2px; font-size: 8px; }
.tr-bot { display: flex; gap: 1px; height: 22px; }
.px { flex: 1; display: flex; align-items: baseline; justify-content: center; padding-right: 1px; line-height: 22px; }
.px small { font-size: 7.500px; margin-right: 3px; position: relative; top: -1px; }
.px strong { font-size: 19.500px; font-weight: normal; letter-spacing: -.2px; }
.px sup { font-size: 6.500px; position: relative; top: -9px; margin-left: 2px; line-height: 0; vertical-align: baseline; }
.red .tbtn, .red .px { background: linear-gradient(#dc2a2a, #b11212); }
.blue .tbtn { background: linear-gradient(#2c3ff0, #2626c6); }
.blue .px { background: linear-gradient(#2230d8, #0e0e9c); }

.ctabs { height: 14px; margin-top: 1px; padding-left: 4px; font-size: 7.200px; }
.ctabs .tab { padding: 0 8px 0 7px; height: 13px; }
.ctabs .tab.on { padding: 0 6px; border-left: 1px solid #aaa; border-bottom: 1px solid #aaa; background: #fff; }
.ctabs .tab:not(.on)::after { content: ""; position: absolute; right: 0; top: 3px; height: 8px; width: 1px; background: #aaa; }
.arrows { font-size: 7px; color: #888; margin-left: 8px; }
.arrows:first-of-type { margin-left: auto; }
.ctabs .arrows:last-child { margin-right: 6px; }

/* terminal */
.term { height: 87px; flex: none; display: flex; border-top: 2px solid #bdbdbd; }
.tstrip { width: 10px; flex: none; background: linear-gradient(#dfe9f2, #c8d8e7); display: flex; flex-direction: column; align-items: center; padding-top: 1px; margin-left: 1px; }
.tstrip em { font-size: 8px; font-weight: bold; line-height: 8px; height: 8px; }
.tstrip span { margin-top: auto; margin-bottom: 1px; writing-mode: vertical-rl; font-size: 7.500px; color: #333; line-height: 10px; letter-spacing: -.4px; }
.tmain { flex: 1; min-width: 0; display: flex; flex-direction: column; }
.tgrid { height: 69px; flex: none; display: flex; padding-right: 3px; border-bottom: 1px solid #9a9a9a; }
.mail { flex: 1; min-width: 0; background: #fff; }
.mh, .mr { display: grid; grid-template-columns: 421px 266px 1fr; align-items: center; white-space: nowrap; }
.mh { height: 16px; font-size: 8px; color: #333; }
.mh span { padding-left: 4px; height: 100%; line-height: 15px; border-right: 1px solid #eee; }
.mh span:first-child { letter-spacing: -.9px; }
.mh span:last-child { text-align: right; padding-right: 3px; border-right: 0; }
.mr { height: 13.250px; font-weight: bold; font-size: 7.500px; color: #1f1f1f; border-top: 1px solid #c8c8c8; }
.mr.g { background: #e9e9e9; }
.mr span:first-child { display: flex; align-items: center; padding-left: 2px; }
.mr u { letter-spacing: -.25px; }
.mr span:nth-child(2) { padding-left: 3px; }
.mr span:last-child { text-align: right; padding-right: 3px; }
.mr svg { width: 9px; height: 7px; margin-right: 5px; flex: none; }
.mr .first u { margin-left: 8px; }
.tscroll { width: 12px; flex: none; }
.tscroll i { top: 11px; height: 27px; }
.ttabs { height: 15px; font-size: 8px; padding-left: 1px; }
.ttabs .tab { padding: 0 7px; height: 14px; letter-spacing: -.1px; }
.ttabs .tab.kn { letter-spacing: -1.300px; }
.ttabs .tab.on { padding: 0 1px 0 5px; }
.ttabs .tab.aft { padding-left: 16px; }
.ttabs .tab:not(.on) + .tab:not(.on)::before { content: ""; position: absolute; left: 0; top: 3px; height: 8px; width: 1px; background: #999; }
.ttabs sub { font-size: 5px; color: #e5484d; font-weight: bold; line-height: 0; position: relative; top: 3px; vertical-align: baseline; letter-spacing: 0; }

/* status */
.status { height: 18px; flex: none; display: flex; border-top: 1px solid #a8a8a8; font-size: 8px; color: #222; background: #f0f0f0; }
.status span { border-right: 1px solid #c9c9c9; height: 100%; display: flex; align-items: center; flex: none; }
.status .c1 { width: 328px; padding-left: 2px; letter-spacing: -.9px; } .c2 { width: 77px; padding-left: 5px; } .c3 { width: 68px; } .c4 { width: 47px; } .c5 { width: 45px; }
.status .c9 { flex: 1; border: 0; gap: 3px; padding-left: 2px; }
.kb { width: 16px; height: 10px; }
```

FILE: script.js
```js
// Chart series, in the zoomed coordinates of each plot's viewBox.
// Candles: [x, high, low, bodyTop, bodyBottom, filled]
var CHARTS = {
  aud: {
    frame: [27, 68, 851, 355], vx: [155, 282, 410, 537, 664, 791], hy: [88, 152, 218, 284],
    price: 312,
    candles: [
      [44,215,258,226,243,1],[60,215,265,222,242,0],[76,215,232,218,230,0],[92,215,262,230,242,1],[108,215,250,215,245,0],
      [236,218,234,218,222,0],[252,218,235,218,222,0],[268,218,248,218,222,0],[282,218,226,218,222,0],[298,218,258,218,222,0],[314,215,222,218,221,0],
      [330,215,265,218,238,1],[346,222,262,237,240,0],[362,222,245,237,240,0],[378,225,250,236,246,1],[394,240,265,246,252,0],[410,222,270,250,264,1],
      [426,258,285,265,280,1],[442,268,300,278,290,1],[458,245,295,285,290,0],[474,285,350,285,310,1],[490,305,350,310,320,1],[505,272,325,275,320,0],
      [521,265,295,275,285,1],[537,245,295,257,285,0],[553,218,265,225,257,0],[569,208,230,212,226,0],[585,208,245,208,218,0],[601,150,220,152,212,0],
      [617,125,160,133,155,0],[633,85,140,108,133,0],[649,85,170,112,165,1],[665,155,210,163,195,1],[681,180,205,190,200,0],[697,160,260,175,230,0],
      [712,160,220,175,218,1],[728,200,245,215,218,0],[744,200,225,215,220,1],[760,215,265,218,255,1],[776,245,285,255,282,1],[792,270,315,279,281,0],[808,280,318,280,312,1]
    ],
    lines: [{ c: "#9c0d0d", p: "385,218 430,235 470,255 520,268 570,268 600,262 640,235 700,210 740,190 770,192 805,207" }]
  },
  chf: {
    frame: [29, 68, 853, 353], vx: [94, 157, 222, 285, 349, 412, 476, 539, 603, 666, 730, 793], hy: [88, 152, 218, 284],
    price: 270,
    bars: [[415,113,150],[423,115,150],[431,125,155],[439,125,190],[447,150,240],[455,210,280],[463,225,275],[471,240,275],[479,245,280],[487,215,265],[495,200,245],[503,215,245],[511,215,240],[519,225,245],[527,225,240],[535,225,250],[543,235,270],[551,240,275],[559,240,270],[567,245,275],[575,255,275],[583,255,280],[591,258,285],[599,258,290],[607,258,285],[615,280,295],[623,282,310],[631,290,315],[639,295,320],[647,285,325],[655,290,330],[663,305,330],[671,315,335],[679,315,345],[687,320,350],[695,325,340],[703,265,335],[711,265,310],[719,258,295],[727,260,285],[735,235,270],[743,210,270],[751,225,260],[759,245,280],[767,245,275],[775,245,270],[783,230,260],[791,180,245],[799,180,225],[807,215,255],[815,245,275],[823,250,280],[831,255,280]],
    lines: [{ c: "#a01010", p: "415,146 440,145 470,175 500,195 530,225 560,243 600,245 640,270 680,298 710,305 740,290 780,265 810,243 830,242" }]
  },
  btc: {
    frame: [27, 68, 851, 355], vx: [155, 282, 410, 537, 664, 791], hy: [120, 186, 252], split: 258,
    price: 140,
    trend: [[30,225],[100,228],[115,222],[135,220],[280,225],[330,222],[410,220],[430,218],[445,240],[470,245],[485,228],[520,230],[540,235],[560,225],[565,200],[590,215],[610,210],[620,185],[650,180],[670,185],[720,185],[770,175],[778,120],[795,90],[815,120],[825,150],[833,145]],
    histo: { base: 332, tops: [[30,302],[110,308],[170,305],[250,302],[290,320],[330,328],[345,332],[590,334],[620,318],[650,303],[770,303],[790,272],[812,272],[830,280]] },
    lines: [{ c: "#b02020", dash: "4 5", p: "30,310 120,305 180,300 250,298 300,320 340,330 400,337 520,345 600,330 660,310 760,305 800,285 830,282" }]
  },
  usd: {
    frame: [29, 68, 853, 353], vx: [94, 157, 222, 285, 349, 412, 476, 539, 603, 666, 730, 793], hy: [120, 186, 252, 298, 318], split: 258,
    price: 78,
    candles: [
      [47,215,225,218,222,0],[62,215,248,218,246,1],[78,235,248,237,246,0],[94,228,245,232,238,0],[110,215,238,218,228,0],
      [415,125,145,132,134,0],[430,125,140,131,134,0],[444,120,140,124,136,0],[460,105,130,108,128,0],[476,90,110,95,107,0],[492,95,110,97,106,1],[507,100,113,101,110,1],[523,105,122,109,118,1],[539,100,125,116,118,0],[555,105,128,114,125,1],[571,112,130,116,118,0],[587,113,128,116,119,0],[603,105,125,112,118,0],[619,100,170,113,155,1],[635,118,155,120,153,0],[651,105,135,110,122,0],[667,105,122,110,113,0],[683,105,120,108,117,1],[698,95,120,99,102,0],[713,82,108,87,102,0],[729,85,100,88,91,0],[745,85,98,89,92,0],[761,80,92,83,90,1],[777,82,92,85,88,0],[793,78,90,80,89,0],[809,77,82,79,81,0]
    ],
    lines: [{ c: "#267878", p: "30,288 60,335 80,345 100,330 120,302 150,296 230,300 260,290 310,290 360,298 430,295 470,268 490,272 530,305 570,312 600,315 620,348 660,310 680,312 715,278 760,290 810,297" }]
  }
};

var NS = "http://www.w3.org/2000/svg";
function el(parent, name, attrs) {
  var n = document.createElementNS(NS, name);
  for (var k in attrs) n.setAttribute(k, attrs[k]);
  parent.appendChild(n);
  return n;
}
function lerp(points, x) {
  for (var i = 1; i < points.length; i++) {
    if (x <= points[i][0]) {
      var a = points[i - 1], b = points[i];
      return a[1] + (b[1] - a[1]) * (x - a[0]) / (b[0] - a[0]);
    }
  }
  return points[points.length - 1][1];
}
var GREEN = "#00c41a";

document.querySelectorAll("[data-chart]").forEach(function (svg) {
  var d = CHARTS[svg.getAttribute("data-chart")];
  var g = svg.querySelector(".lay");
  var f = d.frame;

  var grid = "";
  d.vx.forEach(function (x) { grid += "M" + x + " " + f[1] + "V" + f[3]; });
  d.hy.forEach(function (y) { grid += "M" + f[0] + " " + y + "H" + f[2]; });
  el(g, "path", { d: grid, stroke: "#8d8d8d", "stroke-width": 2.4, "stroke-dasharray": "5 7", fill: "none" });
  el(g, "path", { d: "M" + f[0] + " " + d.price + "H" + f[2], stroke: "#4a4f55", "stroke-width": 4 });

  (d.candles || []).forEach(function (c) {
    el(g, "path", { d: "M" + c[0] + " " + c[1] + "V" + c[2], stroke: GREEN, "stroke-width": 3 });
    el(g, "rect", { x: c[0] - 5, y: c[3], width: 10, height: c[4] - c[3], fill: c[5] ? "#fff" : "#000", stroke: GREEN, "stroke-width": 2.6 });
  });
  (d.bars || []).forEach(function (b) {
    el(g, "path", { d: "M" + b[0] + " " + b[1] + "V" + b[2], stroke: GREEN, "stroke-width": 4 });
  });
  if (d.trend) {
    for (var x = 30; x <= 833; x += 8) {
      var y = lerp(d.trend, x), w = 3 + (x * 7 % 9);
      el(g, "path", { d: "M" + x + " " + (y - w) + "V" + (y + w * 0.7), stroke: GREEN, "stroke-width": 3 });
      el(g, "path", { d: "M" + (x - 3) + " " + y + "H" + (x + 3), stroke: GREEN, "stroke-width": 3 });
    }
  }
  if (d.histo) {
    for (var hx = 30; hx <= 830; hx += 8) {
      el(g, "path", { d: "M" + hx + " " + d.histo.base + "V" + lerp(d.histo.tops, hx), stroke: "#8a8a8a", "stroke-width": 3.4 });
    }
  }
  d.lines.forEach(function (l) {
    var a = { points: l.p, fill: "none", stroke: l.c, "stroke-width": 3 };
    if (l.dash) a["stroke-dasharray"] = l.dash;
    el(g, "polyline", a);
  });
  el(g, "rect", { x: f[0], y: f[1], width: f[2] - f[0], height: f[3] - f[1], fill: "none", stroke: "#a8a8a8", "stroke-width": 3 });
  if (d.split) {
    el(g, "rect", { x: f[0], y: d.split - 3, width: f[2] - f[0], height: 6, fill: "#6b6b6b" });
  }
});
```
